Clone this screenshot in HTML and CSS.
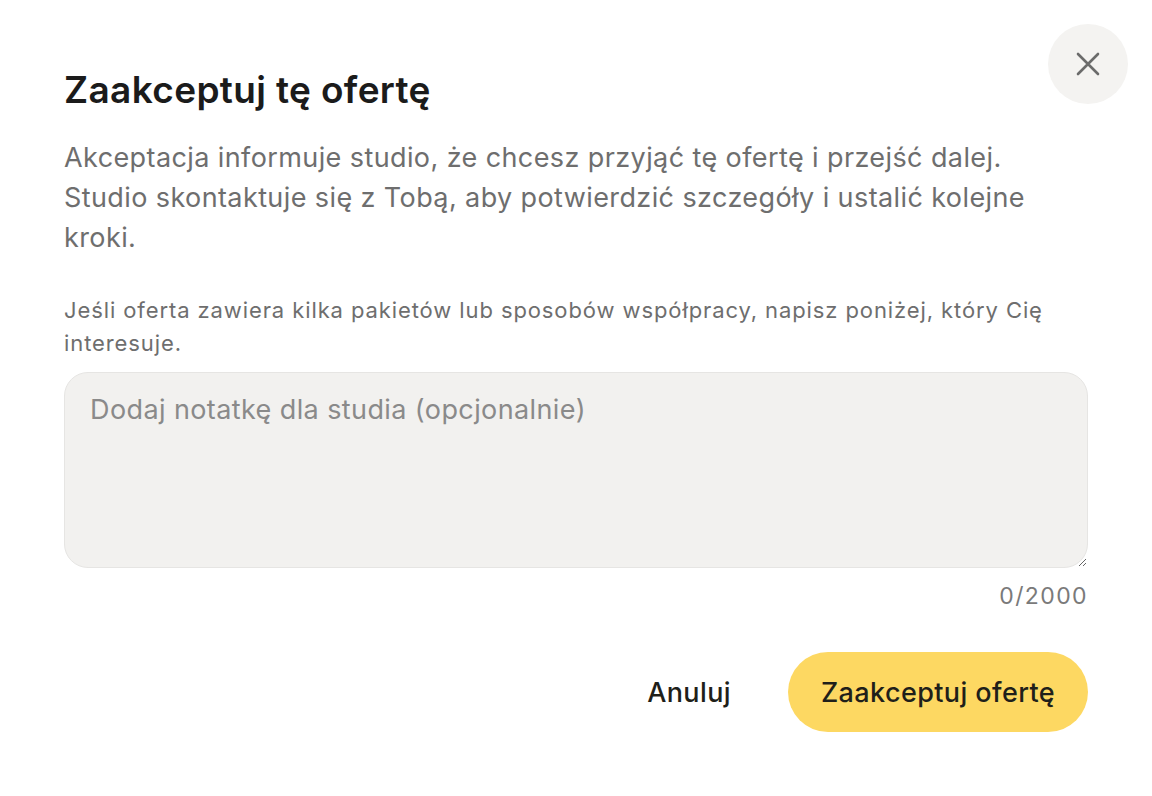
FILE: index.html
```html
<!DOCTYPE html>
<html lang="pl">
<head>
<meta charset="utf-8">
<title>Zaakceptuj tę ofertę</title>
<link rel="stylesheet" href="styles.css">
</head>
<body>
<div class="dialog">
  <button class="close" aria-label="Zamknij">
    <svg width="28" height="28" viewBox="0 0 28 28" fill="none" stroke="#6b6b6b" stroke-width="2.6" stroke-linecap="round">
      <path d="M4 4 L24 24 M24 4 L4 24"/>
    </svg>
  </button>
  <h1 class="title">Zaakceptuj tę ofertę</h1>
  <p class="lead">Akceptacja informuje studio, że chcesz przyjąć tę ofertę i przejść dalej. Studio skontaktuje się z Tobą, aby potwierdzić szczegóły i ustalić kolejne kroki.</p>
  <p class="hint">Jeśli oferta zawiera kilka pakietów lub sposobów współpracy, napisz poniżej, który Cię interesuje.</p>
  <textarea class="note" placeholder="Dodaj notatkę dla studia (opcjonalnie)"></textarea>
  <div class="counter">0/2000</div>
  <div class="actions">
    <button class="btn btn-ghost">Anuluj</button>
    <button class="btn btn-primary">Zaakceptuj ofertę</button>
  </div>
</div>
</body>
</html>
```

FILE: styles.css
```css
* { box-sizing: border-box; }
html, body {
  margin: 0;
  background: #ffffff;
  font-family: Inter, "Noto Sans", "Liberation Sans", sans-serif;
}
.dialog {
  position: relative;
  width: 1152px;
  height: 796px;
  padding: 70px 64px 0 64px;
  display: flex;
  flex-direction: column;
}
.close {
  position: absolute;
  top: 24px;
  right: 24px;
  width: 80px;
  height: 80px;
  border-radius: 50%;
  border: none;
  background: #f4f3f1;
  display: flex;
  align-items: center;
  justify-content: center;
  padding: 0;
}
.title {
  margin: 0;
  font-size: 37px;
  line-height: 40px;
  font-weight: 600;
  color: #1b1b1b;
  letter-spacing: 0.35px;
}
.lead {
  margin: 28px 0 0 0;
  font-size: 27px;
  line-height: 40px;
  color: #6e6e6e;
  font-weight: 400;
  letter-spacing: 0.4px;
  max-width: 990px;
}
.hint {
  margin: 36px 0 0 0;
  font-size: 22px;
  line-height: 33px;
  color: #6e6e6e;
  letter-spacing: 0.9px;
}
.note {
  margin-top: 12px;
  width: 100%;
  height: 196px;
  border: 1px solid #e6e5e3;
  border-radius: 24px;
  background: #f2f1ef;
  padding: 20px 25px;
  font-family: inherit;
  font-size: 27px;
  line-height: 34px;
  letter-spacing: 0.4px;
  color: #1b1b1b;
  resize: vertical;
  outline: none;
}
.note::placeholder {
  color: #8a8a8a;
}
.counter {
  margin-top: 14px;
  text-align: right;
  font-size: 23px;
  line-height: 28px;
  color: #7a7a7a;
  letter-spacing: 1.4px;
}
.actions {
  margin-top: 42px;
  display: flex;
  justify-content: flex-end;
  gap: 25px;
}
.btn {
  height: 80px;
  border: none;
  border-radius: 40px;
  padding: 0 32px;
  font-family: inherit;
  font-size: 27px;
  font-weight: 500;
  letter-spacing: 0.4px;
  color: #1f1f1a;
  background: transparent;
}
.btn-primary {
  background: #fdd862;
  width: 300px;
}
```
